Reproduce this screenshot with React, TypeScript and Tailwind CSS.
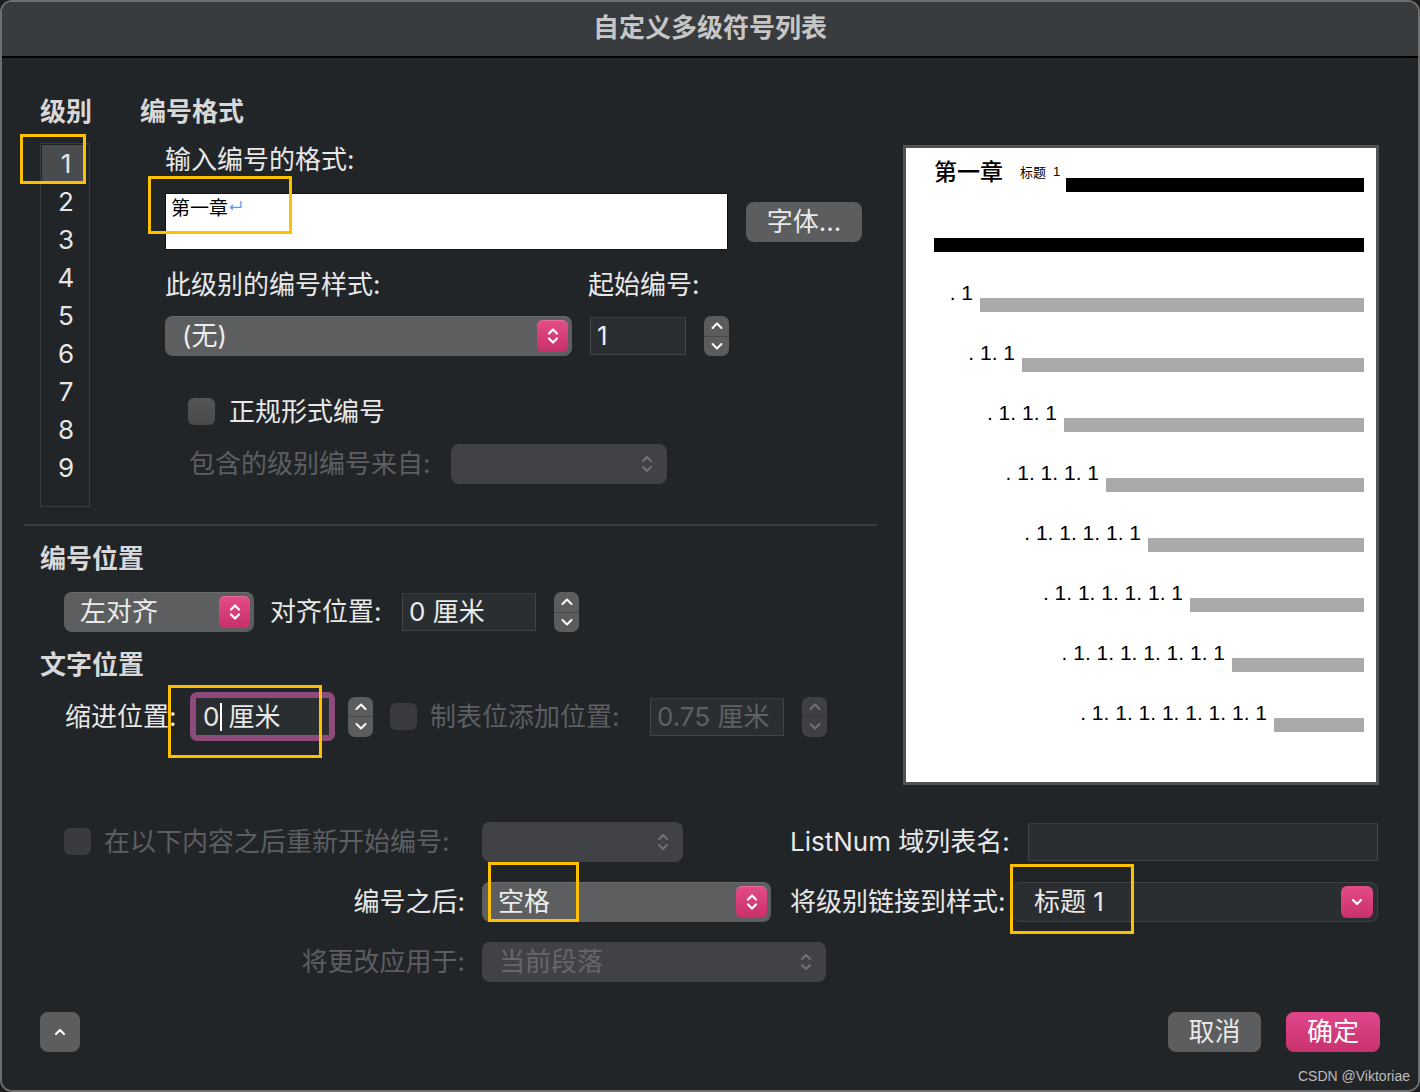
import React from "react";

const levels = [1, 2, 3, 4, 5, 6, 7, 8, 9];

const previewRows = [
  { label: ". 1", w: "w-[46px]" },
  { label: ". 1. 1", w: "w-[88px]" },
  { label: ". 1. 1. 1", w: "w-[130px]" },
  { label: ". 1. 1. 1. 1", w: "w-[172px]" },
  { label: ". 1. 1. 1. 1. 1", w: "w-[214px]" },
  { label: ". 1. 1. 1. 1. 1. 1", w: "w-[256px]" },
  { label: ". 1. 1. 1. 1. 1. 1. 1", w: "w-[298px]" },
  { label: ". 1. 1. 1. 1. 1. 1. 1. 1", w: "w-[340px]" },
];

const PinkArrows = () => (
  <div className="flex h-[32px] w-[31px] shrink-0 items-center justify-center rounded-[6px] bg-linear-to-b from-[#e44c88] to-[#c8306c] shadow-[inset_0_1px_0_rgba(255,255,255,0.18)]">
    <svg width="14" height="24" viewBox="0 0 14 24" fill="none" stroke="white" strokeWidth="2.2" strokeLinecap="round" strokeLinejoin="round">
      <path d="M3 9.5L7 5.5L11 9.5" />
      <path d="M3 14.5L7 18.5L11 14.5" />
    </svg>
  </div>
);

const GrayArrows = () => (
  <svg width="14" height="24" viewBox="0 0 14 24" fill="none" stroke="#707275" strokeWidth="2" strokeLinecap="round" strokeLinejoin="round">
    <path d="M3 9L7 5L11 9" />
    <path d="M3 15L7 19L11 15" />
  </svg>
);

const PopUp = ({ text, className, padLeft }: { text: string; className: string; padLeft: string }) => (
  <div className={`flex h-[40px] items-center justify-between rounded-[8px] bg-[#5d5e60] pr-[4px] text-[26px] leading-[32px] text-[#ececec] shadow-[inset_0_1px_0_rgba(255,255,255,0.08)] ${padLeft} ${className}`}>
    <span>{text}</span>
    <PinkArrows />
  </div>
);

const DisabledPopUp = ({ text, className }: { text?: string; className: string }) => (
  <div className={`flex h-[40px] items-center justify-between rounded-[8px] bg-[#404245] pl-[17px] pr-[13px] text-[26px] leading-[32px] text-[#65676a] ${className}`}>
    <span>{text}</span>
    <GrayArrows />
  </div>
);

const Stepper = ({ disabled }: { disabled?: boolean }) => {
  const stroke = disabled ? "#707275" : "white";
  return (
    <div className={`flex h-[40px] w-[25px] shrink-0 flex-col rounded-[7px] ${disabled ? "bg-[#3e4043]" : "bg-[#5b5c5e]"}`}>
      <div className={`flex flex-1 items-center justify-center border-b ${disabled ? "border-[#34363a]" : "border-[#47484a]"}`}>
        <svg width="14" height="9" viewBox="0 0 14 9" fill="none" stroke={stroke} strokeWidth="2" strokeLinecap="round" strokeLinejoin="round">
          <path d="M2.5 7L7 2.5L11.5 7" />
        </svg>
      </div>
      <div className="flex flex-1 items-center justify-center">
        <svg width="14" height="9" viewBox="0 0 14 9" fill="none" stroke={stroke} strokeWidth="2" strokeLinecap="round" strokeLinejoin="round">
          <path d="M2.5 2L7 6.5L11.5 2" />
        </svg>
      </div>
    </div>
  );
};

const Checkbox = ({ disabled }: { disabled?: boolean }) => (
  <div className={`h-[27px] w-[27px] shrink-0 rounded-[6px] ${disabled ? "bg-[#393b3e]" : "bg-linear-to-b from-[#555658] to-[#48494b]"}`} />
);

const Field = ({ text, className, dim }: { text?: string; className: string; dim?: boolean }) => (
  <div className={`flex h-[38px] items-center border border-[#414346] border-t-[#37393c] bg-[#2b2e31] pl-[6px] text-[26px] leading-[32px] ${dim ? "text-[#5e6063]" : "text-[#ececec]"} ${className}`}>
    {text}
  </div>
);

const Mark = ({ className }: { className: string }) => (
  <div className={`pointer-events-none absolute border-[3px] border-[#ffc000] ${className}`} />
);

export default function App() {
  return (
    <div className="relative h-[1092px] w-[1420px] bg-[#1c1d1f] font-['Inter','Noto_Sans_CJK_SC',sans-serif]">
      <div className="flex h-full flex-col overflow-hidden rounded-[12px] border-2 border-[#6c6e70]">
        <div className="flex h-[56px] shrink-0 items-center justify-center border-b-2 border-black bg-[#393c3e] pb-[4px] text-[26px] font-semibold text-[#c6c6c6]">
          自定义多级符号列表
        </div>

        <div className="flex flex-1 flex-col bg-[#222528]">
          <div className="flex">
            <div className="ml-[22px] w-[853px]">
              <div className="mt-[38px] flex pl-[16px]">
                <div className="w-[50px]">
                  <div className="h-[32px] whitespace-nowrap text-[26px] font-bold leading-[32px] text-[#d8d8d8]">级别</div>
                  <div className="mt-[15px] h-[364px] w-[50px] border border-[#3a3c3f] p-[1px]">
                    {levels.map((n) => (
                      <div
                        key={n}
                        className={`flex h-[38px] w-[42px] items-center justify-center pl-[6px] text-[26px] leading-[32px] text-[#e6e6e6] ${n === 1 ? "bg-[#4a4b4d]" : ""}`}
                      >
                        {n}
                      </div>
                    ))}
                  </div>
                </div>

                <div className="ml-[50px]">
                  <div className="h-[32px] text-[26px] font-bold leading-[32px] text-[#d8d8d8]">编号格式</div>
                  <div className="pl-[25px] text-[26px] leading-[32px] text-[#e8e8e8]">
                    <div className="mt-[16px] h-[32px]">输入编号的格式:</div>
                    <div className="mt-[17px] flex items-start">
                      <div className="h-[57px] w-[563px] border border-[#111214] bg-white pl-[5px]">
                        <div className="mt-[1px] leading-[22px]">
                          <span className="text-[19px] text-black">第一章</span>
                          <span className="relative -top-[3px] text-[15px] leading-none text-[#4aa3f5]">↵</span>
                        </div>
                      </div>
                      <div className="ml-[18px] mt-[9px] flex h-[40px] w-[116px] items-center justify-center rounded-[8px] bg-[#5c5d5f] text-[#e8e8e8]">
                        字体...
                      </div>
                    </div>
                    <div className="mt-[19px] flex h-[32px]">
                      <span className="w-[423px]">此级别的编号样式:</span>
                      <span>起始编号:</span>
                    </div>
                    <div className="mt-[15px] flex items-center">
                      <PopUp text="(无)" className="w-[407px]" padLeft="pl-[17px]" />
                      <Field text="1" className="ml-[18px] w-[96px]" />
                      <div className="ml-[18px]">
                        <Stepper />
                      </div>
                    </div>
                    <div className="mt-[42px] flex h-[27px] items-center pl-[23px]">
                      <Checkbox />
                      <span className="ml-[14px]">正规形式编号</span>
                    </div>
                    <div className="mt-[19px] flex h-[40px] items-center">
                      <span className="w-[286px] pl-[24px] text-[#5c5e61]">包含的级别编号来自:</span>
                      <DisabledPopUp className="w-[216px]" />
                    </div>
                  </div>
                </div>
              </div>

              <div className="mt-[17px] h-[2px] bg-[#393b3e]" />

              <div className="mt-[17px] h-[32px] pl-[16px] text-[26px] font-bold leading-[32px] text-[#d8d8d8]">编号位置</div>
              <div className="mt-[17px] flex h-[40px] items-center pl-[40px] text-[26px] leading-[32px] text-[#e8e8e8]">
                <PopUp text="左对齐" className="w-[190px]" padLeft="pl-[16px]" />
                <span className="ml-[16px] w-[132px]">对齐位置:</span>
                <Field text="0 厘米" className="w-[134px]" />
                <div className="ml-[18px]">
                  <Stepper />
                </div>
              </div>

              <div className="mt-[17px] h-[32px] pl-[16px] text-[26px] font-bold leading-[32px] text-[#d8d8d8]">文字位置</div>
              <div className="mt-[11px] flex h-[49px] items-center text-[26px] leading-[32px] text-[#e8e8e8]">
                <span className="w-[166px] pl-[41px]">缩进位置:</span>
                <div className="h-[49px] w-[145px] rounded-[7px] bg-[#8d4b7c] p-[6px]">
                  <div className="flex h-full items-center bg-[#2b2e31] pl-[7px]">
                    <span>0</span>
                    <span className="ml-[1px] h-[28px] w-[2px] bg-white" />
                    <span className="ml-[6px]">厘米</span>
                  </div>
                </div>
                <div className="ml-[13px]">
                  <Stepper />
                </div>
                <div className="ml-[17px]">
                  <Checkbox disabled />
                </div>
                <span className="ml-[13px] w-[220px] text-[#5c5e61]">制表位添加位置:</span>
                <Field text="0.75 厘米" className="w-[134px]" dim />
                <div className="ml-[18px]">
                  <Stepper disabled />
                </div>
              </div>
            </div>

            <div className="ml-[26px] mt-[87px] h-[640px] w-[476px] border-[3px] border-[#505254] bg-white pl-[28px] pr-[12px]">
              <div className="mt-[12px] flex items-start">
                <span className="text-[23px] font-medium leading-[24px] text-black">第一章</span>
                <span className="ml-[17px] mt-[5px] text-[13px] leading-[14px] text-black">标题</span>
                <span className="ml-[7px] mt-[5px] font-['Liberation_Sans',sans-serif] text-[13px] leading-[14px] text-black">1</span>
                <div className="ml-[6px] mt-[18px] h-[14px] flex-1 bg-black" />
              </div>
              <div className="mt-[46px] h-[14px] bg-black" />
              <div className="mt-[30px]">
                {previewRows.map((r) => (
                  <div key={r.label} className="flex h-[60px] items-start">
                    <span className={`${r.w} shrink-0 whitespace-nowrap pr-[7px] text-right font-['Liberation_Sans',sans-serif] text-[21px] leading-[21px] text-black`}>
                      {r.label}
                    </span>
                    <div className="mt-[16px] h-[14px] flex-1 bg-[#aaaaaa]" />
                  </div>
                ))}
              </div>
            </div>
          </div>

          <div className="mt-[37px] flex h-[39px] items-center text-[26px] leading-[32px] text-[#e8e8e8]">
            <div className="flex w-[480px] items-center pl-[62px]">
              <Checkbox disabled />
              <span className="ml-[13px] text-[#5c5e61]">在以下内容之后重新开始编号:</span>
            </div>
            <DisabledPopUp className="w-[201px]" />
            <span className="ml-[107px] w-[238px]">ListNum 域列表名:</span>
            <Field className="w-[350px]" />
          </div>

          <div className="mt-[21px] flex h-[39px] items-center text-[26px] leading-[32px] text-[#e8e8e8]">
            <span className="w-[480px] pr-[17px] text-right">编号之后:</span>
            <PopUp text="空格" className="w-[289px]" padLeft="pl-[16px]" />
            <span className="ml-[19px] w-[222px]">将级别链接到样式:</span>
            <div className="flex h-[40px] w-[366px] items-center justify-between rounded-[8px] border border-[#3f4144] bg-[#2b2e31] pl-[21px] pr-[4px]">
              <span>标题 1</span>
              <div className="flex h-[32px] w-[32px] items-center justify-center rounded-[6px] bg-linear-to-b from-[#e44c88] to-[#c8306c]">
                <svg width="12" height="8" viewBox="0 0 12 8" fill="none" stroke="white" strokeWidth="2.2" strokeLinecap="round" strokeLinejoin="round">
                  <path d="M2 2L6 6L10 2" />
                </svg>
              </div>
            </div>
          </div>

          <div className="mt-[21px] flex h-[39px] items-center text-[26px] leading-[32px]">
            <span className="w-[480px] pr-[17px] text-right text-[#5c5e61]">将更改应用于:</span>
            <DisabledPopUp text="当前段落" className="w-[344px]" />
          </div>

          <div className="mt-[31px] flex h-[40px] items-center text-[26px] leading-[32px]">
            <div className="ml-[38px] flex h-[40px] w-[40px] items-center justify-center rounded-[8px] bg-[#5c5d5f]">
              <svg width="12" height="8" viewBox="0 0 12 8" fill="none" stroke="white" strokeWidth="2.2" strokeLinecap="round" strokeLinejoin="round">
                <path d="M2 6L6 2L10 6" />
              </svg>
            </div>
            <div className="flex-1" />
            <div className="flex h-[40px] w-[93px] items-center justify-center rounded-[8px] bg-[#5c5d5f] text-[#e8e8e8]">取消</div>
            <div className="ml-[25px] mr-[38px] flex h-[40px] w-[94px] items-center justify-center rounded-[8px] bg-linear-to-b from-[#e0478a] to-[#c9306e] text-white">确定</div>
          </div>

          <div className="mt-[16px] pr-[8px] text-right font-['Liberation_Sans',sans-serif] text-[14px] leading-[16px] text-[#bdbdbd]">
            CSDN @Viktoriae
          </div>
        </div>
      </div>

      <Mark className="left-[20px] top-[134px] h-[50px] w-[66px]" />
      <Mark className="left-[148px] top-[176px] h-[58px] w-[144px]" />
      <Mark className="left-[168px] top-[685px] h-[73px] w-[154px]" />
      <Mark className="left-[488px] top-[862px] h-[60px] w-[91px]" />
      <Mark className="left-[1010px] top-[864px] h-[70px] w-[124px]" />
    </div>
  );
}
